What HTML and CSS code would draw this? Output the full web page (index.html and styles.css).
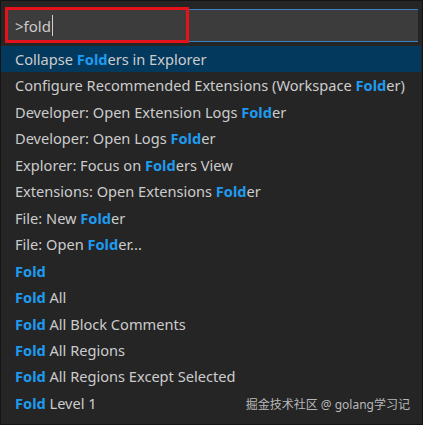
FILE: index.html
```html
<!DOCTYPE html>
<html>
<head>
<meta charset="utf-8">
<link rel="stylesheet" href="styles.css">
</head>
<body>
<div class="panel">
  <div class="input-wrap">
    <div class="input"><span class="typed">&gt;fold</span><span class="caret"></span></div>
    <div class="annot"></div>
  </div>
  <ul class="list">
    <li class="row selected">Collapse <b>Fold</b>ers in Explorer</li>
    <li class="row">Configure Recommended Extensions (Workspace <b>Fold</b>er)</li>
    <li class="row">Developer: Open Extension Logs <b>Fold</b>er</li>
    <li class="row">Developer: Open Logs <b>Fold</b>er</li>
    <li class="row">Explorer: Focus on <b>Fold</b>ers View</li>
    <li class="row">Extensions: Open Extensions <b>Fold</b>er</li>
    <li class="row">File: New <b>Fold</b>er</li>
    <li class="row">File: Open <b>Fold</b>er...</li>
    <li class="row"><b>Fold</b></li>
    <li class="row"><b>Fold</b> All</li>
    <li class="row"><b>Fold</b> All Block Comments</li>
    <li class="row"><b>Fold</b> All Regions</li>
    <li class="row"><b>Fold</b> All Regions Except Selected</li>
    <li class="row"><b>Fold</b> Level 1</li>
  </ul>
  <div class="watermark">掘金技术社区 @ golang学习记</div>
</div>
</body>
</html>
```
FILE: styles.css
```css
html, body {
  margin: 0;
  padding: 0;
  background: #252526;
}
.panel {
  position: relative;
  box-sizing: border-box;
  width: 423px;
  height: 425px;
  border: 1px solid #141414;
  background: #252526;
  font-family: "Noto Sans", "Noto Sans CJK SC", sans-serif;
  color: #cccccc;
  overflow: hidden;
}
.input-wrap {
  position: relative;
  padding: 8px 4px 0 7px;
  height: 36px;
  box-sizing: border-box;
}
.input {
  box-sizing: border-box;
  height: 33px;
  background: #3c3c3c;
  border-top: 1px solid #3a82c4;
  border-bottom: 1px solid #3a82c4;
  display: flex;
  align-items: center;
  padding-left: 7px;
  font-size: 15px;
  color: #cccccc;
}
.caret {
  display: inline-block;
  width: 1px;
  height: 21px;
  background: #d0d0d0;
  margin-left: 1px;
}
.annot {
  position: absolute;
  left: 4px;
  top: 6px;
  width: 178px;
  height: 30px;
  border: 3px solid #e3121b;
}
.list {
  list-style: none;
  margin: 9px 0 0 0;
  padding: 0;
}
.row {
  height: 26.46px;
  line-height: 26.46px;
  padding-left: 14px;
  font-size: 14.6px;
  white-space: nowrap;
  margin-right: 1px;
}
.row.selected {
  background: #04395e;
}
.row b {
  color: #1e9bf0;
  font-weight: 700;
}
.watermark {
  position: absolute;
  right: 12px;
  bottom: 11px;
  font-size: 12px;
  color: #b8b8b8;
}
```
